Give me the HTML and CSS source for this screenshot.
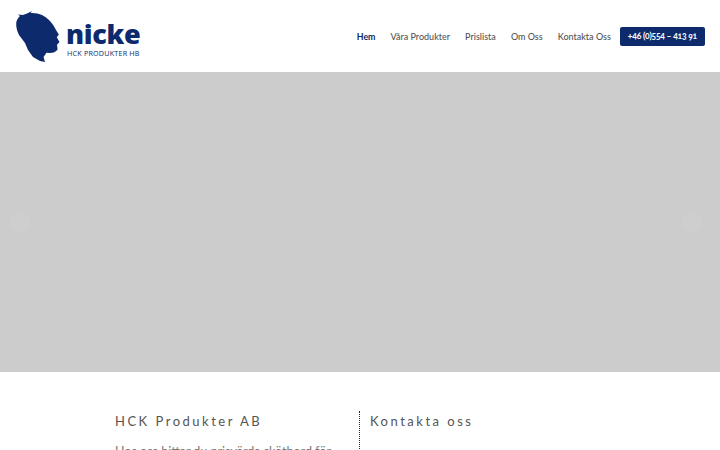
FILE: index.html
```html
<!DOCTYPE html>
<html lang="sv">
<head>
<meta charset="utf-8">
<title>HCK Produkter</title>
<link rel="stylesheet" href="styles.css">
</head>
<body>
<header class="site-header">
  <a class="logo" href="#">
    <svg class="logo-head" width="46" height="52" viewBox="0 0 46 52"><path fill="#0d2a6c" d="M5 6 3 4.500 8 5 12 3.500 17 1 15.500 3C24 2.500 30 6 34 10 38 14 40 18 41 20L43.800 24.500 41.800 27.200 44.500 32 42 34.800 42.600 39.500C41 42 38 43 35 43L31.500 42.800 28.500 47 30 52 25 51 18 47 13 40 10 33 4 25C2 21 1 17 1.200 13 1.500 10 3 8 5 6Z"/></svg>
    <span class="logo-text">
      <span class="logo-name">nicke</span>
      <span class="logo-sub">HCK PRODUKTER HB</span>
    </span>
  </a>
  <nav class="nav">
    <a class="nav-link nav-active" href="#">Hem</a>
    <a class="nav-link" href="#">Våra Produkter</a>
    <a class="nav-link" href="#">Prislista</a>
    <a class="nav-link" href="#">Om Oss</a>
    <a class="nav-link" href="#">Kontakta Oss</a>
    <a class="nav-phone" href="#">+46 (0)554 – 413 91</a>
  </nav>
</header>
<section class="slider">
  <span class="arrow"></span>
  <span class="arrow"></span>
</section>
<main class="content">
  <div class="col col-left">
    <h2 class="heading">HCK Produkter AB</h2>
    <p class="text">Hos oss hittar du prisvärda skötbord för</p>
  </div>
  <div class="col col-right">
    <h2 class="heading">Kontakta oss</h2>
  </div>
</main>
</body>
</html>
```
FILE: styles.css
```css
* { box-sizing: border-box; }
html, body { margin: 0; height: 450px; overflow: hidden; background: #fff; }
body { font-family: "Lato", "Liberation Sans", sans-serif; color: #444; }
a { text-decoration: none; color: inherit; }
.site-header { height: 72px; display: flex; align-items: center; justify-content: space-between; padding: 0 15px; }
.logo { display: flex; align-items: flex-start; height: 52px; }
.logo-head { display: block; }
.logo-text { display: flex; flex-direction: column; margin-left: 5px; padding-top: 10px; }
.logo-name { font-family: "Open Sans", sans-serif; font-weight: 800; font-size: 27px; line-height: 28px; color: #0d2a6c; letter-spacing: -0.3px; }
.logo-sub { font-family: "Open Sans", sans-serif; font-size: 7.200px; line-height: 9px; font-weight: 500; color: #0d2a6c; letter-spacing: 0.2px; margin-top: 1px; padding-left: 1px; }
.nav { display: flex; align-items: center; gap: 15px; font-size: 9px; }
.nav-link { color: #555; font-weight: 500; }
.nav-active { color: #0d2a5e; font-weight: 700; font-size: 8.800px; }
.nav-phone { background: #0d2a6c; color: #fff; font-weight: 700; font-size: 8.500px; letter-spacing: -0.2px; font-feature-settings: "onum"; height: 19px; line-height: 19px; padding: 0 8px; border-radius: 2px; margin-left: -6px; }
.slider { height: 300px; background: #ccc; display: flex; align-items: center; justify-content: space-between; padding: 0 18px 0 10px; }
.arrow { width: 20px; height: 20px; border-radius: 50%; background: #cecece; }
.content { display: flex; padding: 39px 0 0 115px; }
.col-left { width: 244px; padding-right: 20px; }
.col-right { border-left: 1px dotted #0d2a6c; padding-left: 10px; height: 40px; }
.heading { margin: 0; font-weight: 400; font-size: 13px; line-height: 20px; letter-spacing: 2.500px; color: #555; }
.text { margin: 11px 0 0; font-size: 12.500px; line-height: 20px; color: #777; white-space: nowrap; }
```
